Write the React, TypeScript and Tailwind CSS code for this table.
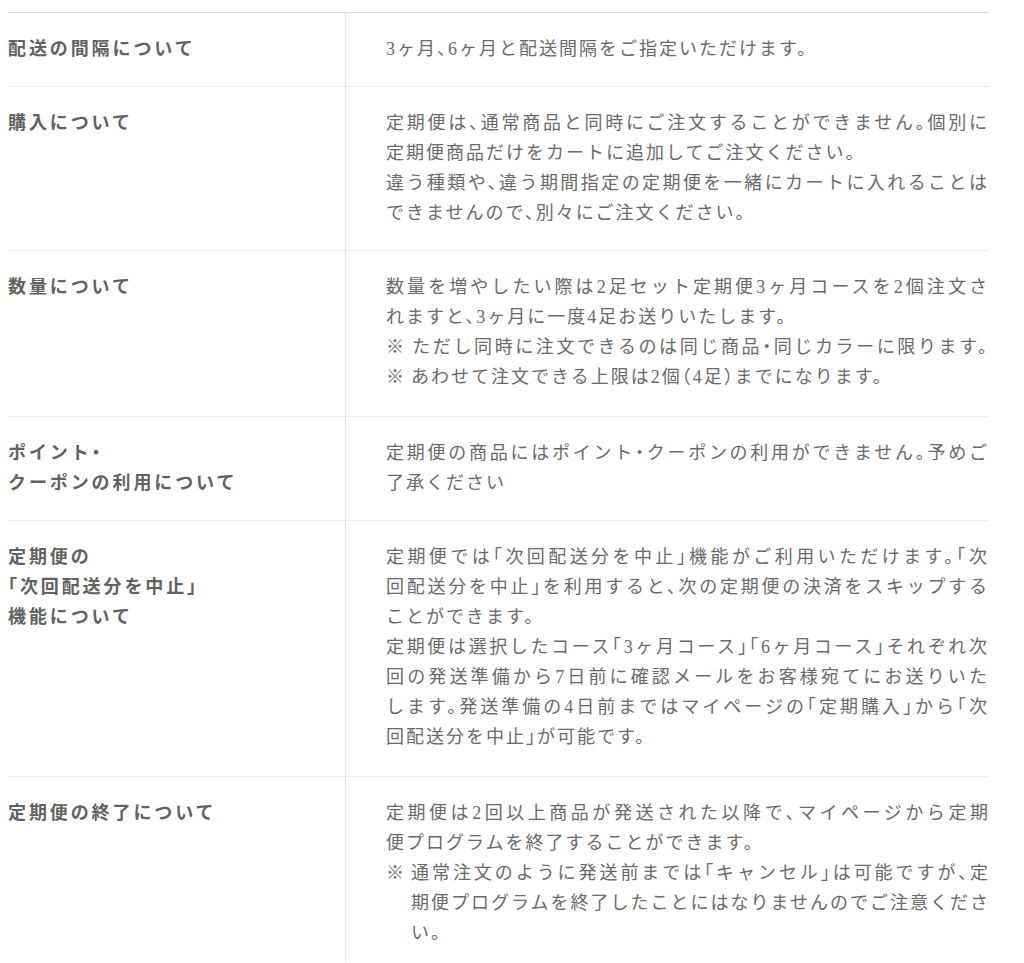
type Line = { text: string; full?: boolean };

const rows: { title: string[]; body: React.ReactNode; pb: string }[] = [
  {
    title: ["配送の間隔について"],
    pb: "pb-[22px]",
    body: <Lines lines={[{ text: "3ヶ月、6ヶ月と配送間隔をご指定いただけます。" }]} />,
  },
  {
    title: ["購入について"],
    pb: "pb-[22px]",
    body: (
      <Lines
        lines={[
          { text: "定期便は、通常商品と同時にご注文することができません。個別に", full: true },
          { text: "定期便商品だけをカートに追加してご注文ください。" },
          { text: "違う種類や、違う期間指定の定期便を一緒にカートに入れることは", full: true },
          { text: "できませんので、別々にご注文ください。" },
        ]}
      />
    ),
  },
  {
    title: ["数量について"],
    pb: "pb-[24px]",
    body: (
      <Lines
        lines={[
          { text: "数量を増やしたい際は2足セット定期便3ヶ月コースを2個注文さ", full: true },
          { text: "れますと、3ヶ月に一度4足お送りいたします。" },
          { text: "※\u2006ただし同時に注文できるのは同じ商品・同じカラーに限ります。", full: true },
          { text: "※\u2006あわせて注文できる上限は2個（4足）までになります。" },
        ]}
      />
    ),
  },
  {
    title: ["ポイント・", "クーポンの利用について"],
    pb: "pb-[22px]",
    body: (
      <Lines
        lines={[
          { text: "定期便の商品にはポイント・クーポンの利用ができません。予めご", full: true },
          { text: "了承ください" },
        ]}
      />
    ),
  },
  {
    title: ["定期便の", "「次回配送分を中止」", "機能について"],
    pb: "pb-[24px]",
    body: (
      <Lines
        lines={[
          { text: "定期便では「次回配送分を中止」機能がご利用いただけます。「次", full: true },
          { text: "回配送分を中止」を利用すると、次の定期便の決済をスキップする", full: true },
          { text: "ことができます。" },
          { text: "定期便は選択したコース「3ヶ月コース」「6ヶ月コース」それぞれ次", full: true },
          { text: "回の発送準備から7日前に確認メールをお客様宛てにお送りいた", full: true },
          { text: "します。発送準備の4日前まではマイページの「定期購入」から「次", full: true },
          { text: "回配送分を中止」が可能です。" },
        ]}
      />
    ),
  },
  {
    title: ["定期便の終了について"],
    pb: "pb-[22px]",
    body: (
      <>
        <Lines
          lines={[
            { text: "定期便は2回以上商品が発送された以降で、マイページから定期", full: true },
            { text: "便プログラムを終了することができます。" },
          ]}
        />
        <div className="flex">
          <span className="w-[25px] shrink-0">※</span>
          <Lines
            lines={[
              { text: "通常注文のように発送前までは「キャンセル」は可能ですが、定", full: true },
              { text: "期便プログラムを終了したことにはなりませんのでご注意くださ", full: true },
              { text: "い。" },
            ]}
          />
        </div>
      </>
    ),
  },
];

function Lines({ lines }: { lines: Line[] }) {
  return (
    <div className="min-w-0 flex-1">
      {lines.map((line, i) => (
        <div
          key={i}
          className={line.full ? "whitespace-nowrap text-justify [text-align-last:justify]" : "whitespace-nowrap"}
        >
          {line.text}
        </div>
      ))}
    </div>
  );
}

export default function App() {
  return (
    <div className="min-h-[963px] bg-white pt-[12px] pl-[8px] pr-[35px] font-['Liberation_Serif','Noto_Sans_CJK_JP',serif] text-[18px] leading-[30px] tracking-[2px] [font-feature-settings:'halt']">
      <div className="border-t border-[#dcdcdc]">
        {rows.map((row, i) => (
          <div key={i} className={`flex ${i > 0 ? "border-t border-[#ececec]" : ""}`}>
            <div className={`w-[337px] shrink-0 pt-[21px] ${row.pb} font-bold tracking-[2.9px] text-[#626262]`}>
              {row.title.map((t, j) => (
                <div key={j}>{t}</div>
              ))}
            </div>
            <div className={`flex-1 border-l border-dotted border-[#cfcfcf] pl-[40px] pt-[21px] ${row.pb} text-[#6a6a6a]`}>
              {row.body}
            </div>
          </div>
        ))}
      </div>
    </div>
  );
}
